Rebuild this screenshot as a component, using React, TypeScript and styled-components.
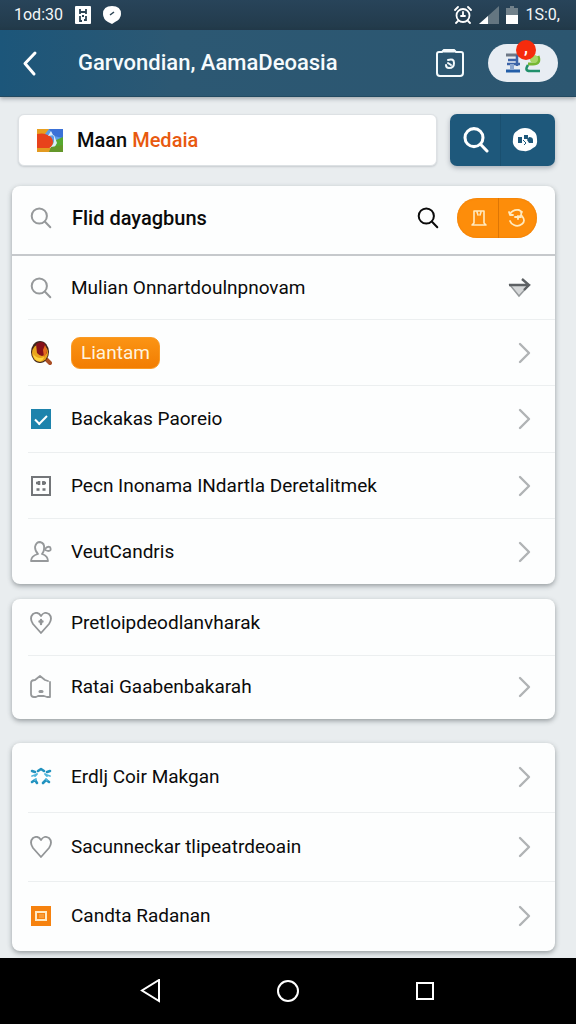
import React from 'react';
import styled, { createGlobalStyle } from 'styled-components';

const GlobalStyle = createGlobalStyle`
  * { box-sizing: border-box; }
  body {
    margin: 0;
    background: #e9edef;
    font-family: Roboto, 'Liberation Sans', sans-serif;
    color: #0b0b0b;
  }
  button, input { font: inherit; color: inherit; }
  button { border: 0; padding: 0; background: none; cursor: pointer; }
  a { color: inherit; text-decoration: none; }
  svg { display: block; flex: none; }
`;

const Page = styled.div`
  display: flex;
  flex-direction: column;
  min-height: 100vh;
`;

const StatusBar = styled.div`
  display: flex;
  align-items: center;
  justify-content: space-between;
  height: 30px;
  padding: 0 16px 0 14px;
  background: linear-gradient(#28445a, #223a4a);
  color: #f3f7f9;
  font-size: 16px;
  line-height: 20px;
`;

const StatusGroup = styled.div<{ $gap: number }>`
  display: flex;
  align-items: center;
  gap: ${(p) => p.$gap}px;
`;

const AppBar = styled.header`
  display: flex;
  align-items: center;
  height: 67px;
  padding: 0 18px 0 16px;
  background: linear-gradient(90deg, #1c567a, #2c5873 30%, #2c5670);
  border-bottom: 1px solid #234a61;
  box-shadow: 0 2px 4px rgba(40, 50, 60, 0.35);
  color: #f6fbfd;
`;

const Title = styled.h1`
  flex: 1;
  margin: 0 0 0 34px;
  font-size: 22px;
  line-height: 32px;
  font-weight: 500;
  white-space: nowrap;
`;

const IconButton = styled.button`
  display: flex;
  align-items: center;
  justify-content: center;
`;

const AccountPill = styled.button`
  position: relative;
  display: flex;
  align-items: center;
  justify-content: center;
  width: 70px;
  height: 38px;
  margin-left: 24px;
  border-radius: 19px;
  background: #e8edf3;
`;

const Badge = styled.span`
  position: absolute;
  top: -4px;
  left: 28px;
  width: 20px;
  height: 20px;
  border-radius: 50%;
  background: #f62b0c;
  color: #fff;
  font-size: 16px;
  line-height: 16px;
  font-weight: 700;
`;

const Main = styled.main`
  flex: 1;
  display: flex;
  flex-direction: column;
  padding: 17px 21px 7px 12px;
`;

const TopRow = styled.div`
  display: flex;
  align-items: center;
  gap: 13px;
  padding-left: 6px;
  margin-bottom: 20px;
`;

const BrandField = styled.a`
  flex: 1;
  display: flex;
  align-items: center;
  gap: 14px;
  height: 52px;
  padding: 0 18px;
  border: 1px solid #dde1e4;
  border-radius: 6px;
  background: #fff;
  box-shadow: 0 1px 2px rgba(60, 70, 80, 0.2);
  font-size: 20px;
  line-height: 28px;
  font-weight: 500;
  white-space: nowrap;
`;

const Accent = styled.span`
  color: #e8590f;
`;

const ActionGroup = styled.div`
  display: flex;
  width: 105px;
  height: 52px;
  padding: 0 6px 0 2px;
  border-radius: 7px;
  background: #1e587b;
  box-shadow: 0 2px 5px rgba(50, 60, 80, 0.35);
`;

const ActionButton = styled(IconButton)`
  flex: 1;
  & + & { border-left: 1px solid #1a5070; }
`;

const Card = styled.section<{ $gap?: number }>`
  margin-bottom: ${(p) => p.$gap ?? 0}px;
  border-radius: 8px;
  background: #fdfefe;
  box-shadow: 0 2px 5px rgba(50, 60, 65, 0.45);
`;

const SearchRow = styled.form`
  display: flex;
  align-items: center;
  height: 70px;
  padding: 0 18px 4px;
  border-bottom: 2px solid #c6c9cc;
`;

const SearchInput = styled.input`
  flex: 1;
  min-width: 0;
  margin-left: 20px;
  padding: 0;
  border: 0;
  outline: 0;
  background: none;
  font-size: 20px;
  line-height: 28px;
  font-weight: 500;
`;

const OrangeGroup = styled.div`
  display: flex;
  width: 80px;
  height: 40px;
  margin-left: 18px;
  padding: 0 2px 0 4px;
  border-radius: 20px;
  background: #fd8d0a;
  box-shadow: inset 0 0 2px #e87800;
`;

const OrangeButton = styled(IconButton)`
  flex: 1;
  & + & { border-left: 1px solid #dd7605; }
`;

const List = styled.ul`
  margin: 0;
  padding: 0 0 0 16px;
  list-style: none;
`;

const Item = styled.li<{ $height: number }>`
  display: flex;
  height: ${(p) => p.$height}px;
  & + & { border-top: 1px solid #eceff0; }
`;

const RowLink = styled.a<{ $lift?: number }>`
  flex: 1;
  display: flex;
  align-items: center;
  gap: 19px;
  padding: 0 24px ${(p) => p.$lift ?? 0}px 2px;
  font-size: 19px;
  line-height: 28px;
  white-space: nowrap;
`;

const RowLabel = styled.span`
  flex: 1;
`;

const RowCheckLabel = styled(RowLink).attrs({ as: 'label' })``;

const Tag = styled.span`
  padding: 1px 9px;
  border-radius: 9px;
  background: linear-gradient(#fb9414, #f27d02);
  border: 1px solid #fa9a24;
  color: #fff3dc;
`;

const Spacer = styled.span`
  flex: 1;
`;

const CheckBox = styled.input`
  appearance: none;
  display: flex;
  align-items: center;
  justify-content: center;
  flex: none;
  width: 20px;
  height: 20px;
  margin: 0 1px;
  background: #1d83ac;
  &:checked::after {
    content: '';
    width: 10px;
    height: 5px;
    border: solid #fff;
    border-width: 0 0 2px 2px;
    transform: translateY(-1px) rotate(-45deg);
  }
`;

const NavBar = styled.nav`
  display: flex;
  align-items: center;
  justify-content: space-between;
  height: 66px;
  padding: 0 24%;
  background: #000;
`;

const svgBase = { fill: 'none', strokeLinecap: 'round', strokeLinejoin: 'round' } as const;

const SearchIcon = ({ size = 22, color = '#96999b', width = 2 }) => (
  <svg {...svgBase} width={size} height={size} viewBox="0 0 22 22" stroke={color} strokeWidth={width}>
    <circle cx="9.3" cy="9" r="7.6" />
    <path d="M15 14.8 20.3 20.3" />
  </svg>
);

const Chevron = () => (
  <svg {...svgBase} width="14" height="22" viewBox="0 0 14 22" stroke="#b0b3b5" strokeWidth="2.4">
    <path d="M3 2 12 11 3 20" />
  </svg>
);

const ArrowMark = () => (
  <svg width="24" height="22" viewBox="0 0 24 22" fill="none">
    <path d="M3 8H22L12 19Z" fill="#d6d8d9" stroke="#969a9c" strokeWidth="1.5" />
    <path d="M2 8H22M15 2 22 8 17 13" stroke="#5d6164" strokeWidth="2.4" />
  </svg>
);

const BackIcon = () => (
  <svg {...svgBase} width="28" height="28" viewBox="0 0 28 28" stroke="#fff" strokeWidth="3">
    <path d="M19 4 9 14.500 18 25" />
  </svg>
);

const ClipIcon = () => (
  <svg {...svgBase} width="28" height="30" viewBox="0 0 28 30" stroke="#f4fafc" strokeWidth="2">
    <path d="M3 4H6L8 2H18L20 4H25Q27 4 27 6V25Q27 28 24 28H4Q1 28 1 25V6Q1 4 3 4Z" />
    <path d="M8 3H18" strokeWidth="3" />
    <path d="M12 12Q18 10 18 15Q18 20 13 20Q10 20 10 17M12 15 15 17" />
  </svg>
);

const AccountArt = () => (
  <svg width="38" height="24" viewBox="0 0 38 24" fill="none">
    <path d="M2 4H16" stroke="#6e7887" strokeWidth="3" />
    <path d="M4 9H14M13 4V15M3 13H16" stroke="#3d64a8" strokeWidth="2.500" />
    <path d="M2 20H16" stroke="#235ea8" strokeWidth="3" />
    <path d="M8 13V19" stroke="#8ba6cf" strokeWidth="4" />
    <path d="M34 5Q37 13 29 13H24" stroke="#76b832" strokeWidth="3" />
    <circle cx="30" cy="8" r="4" fill="#a7d665" />
    <path d="M24 14Q20 20 26 20H36" stroke="#21906b" strokeWidth="2.500" />
  </svg>
);

const BrandArt = () => (
  <svg width="26" height="23" viewBox="0 0 26 23">
    <rect width="26" height="23" fill="#5c9ee8" />
    <path d="M0 0H12L8 5H0Z" fill="#e89f20" />
    <path d="M12 0H26V9L17 7Z" fill="#3b71d7" />
    <path d="M17 12 26 8V23H12Z" fill="#56a82f" />
    <path d="M0 5Q8 3 14 8Q18 13 14 19L8 22H0Z" fill="#e8421b" />
    <path d="M11 7 14 2 17 8Q18 16 11 20L16 21 20 14 17 6" fill="#dcecf8" />
    <path d="M0 19H26V23H0Z" fill="#e39a20" />
    <path d="M14 18 26 16V23H12Z" fill="#64972a" />
  </svg>
);

const RobotIcon = () => (
  <svg width="26" height="24" viewBox="0 0 26 24">
    <path d="M5 3Q8 0 13 0Q18 0 21 3Q25 5 25 11Q26 18 21 20Q17 24 12 23Q6 23 4 20Q0 17 1 11Q1 5 5 3Z" fill="#fff" />
    <path d="M6 9H10V15H6ZM12 7H16V11H12ZM17 9Q21 9 21 12V15H17L15 12Z" fill="#1e587b" />
    <path d="M11 12 14 15 12 17" stroke="#1e587b" fill="none" />
  </svg>
);

const StandIcon = () => (
  <svg {...svgBase} width="18" height="18" viewBox="0 0 18 18" stroke="#ffeabf" strokeWidth="1.6">
    <path d="M4 2H14V14L16 16H2L4 14ZM7 3 8 6M11 3 10 6" />
  </svg>
);

const HistoryIcon = () => (
  <svg {...svgBase} width="20" height="20" viewBox="0 0 20 20" stroke="#ffeabf" strokeWidth="1.8">
    <path d="M3 6Q6 1 12 2L15 4M2 4 3 7 6 7M14 4Q15 7 13 8M15 8Q19 13 15 16Q11 19 7 17Q4 16 3 13" />
    <path d="M8 9H14M11 8V11" />
  </svg>
);

const GemIcon = () => (
  <svg width="22" height="26" viewBox="0 0 22 26">
    <path d="M15 18 20 23" stroke="#a94e25" strokeWidth="4" strokeLinecap="round" />
    <ellipse cx="10" cy="12" rx="9" ry="11" fill="#3e261c" />
    <ellipse cx="10" cy="13" rx="8" ry="9" fill="#e9a51d" />
    <path d="M6 4Q12 0 15 4L17 13Q12 19 7 13Z" fill="#861019" />
    <path d="M15 5Q19 12 14 17L13 10Z" fill="#e56a1c" />
    <path d="M3 14Q8 20 14 17Q13 22 8 21Q4 20 3 14" fill="#ffd43c" />
  </svg>
);

const GridIcon = () => (
  <svg width="22" height="22" viewBox="0 0 22 22" fill="none" stroke="#737679">
    <rect x="2" y="2" width="18" height="18" strokeWidth="2" />
    <path d="M6 8H10M9 6V10M12 8H16M13.500 6V10M6.500 14.500H9.500M12.500 14.500H15.500" strokeWidth="2.600" />
  </svg>
);

const PersonIcon = () => (
  <svg {...svgBase} width="22" height="22" viewBox="0 0 22 22" stroke="#96999b" strokeWidth="1.8">
    <path d="M8 13Q5 10 5 6Q6 1 10 1Q15 2 14 8Q14 11 12 13Q18 15 18 20H1Q1 15 8 13Z" />
    <path d="M15 8Q17 5 20 6Q22 10 18 10L15 9" />
  </svg>
);

const HeartIcon = ({ pin = false }) => (
  <svg {...svgBase} width="22" height="22" viewBox="0 0 22 22" stroke="#929597" strokeWidth="1.8">
    <path d="M11 21 3 12Q-1 6 3 2Q8-1 11 4Q14-1 19 2Q23 6 19 12Z" />
    {pin && <path d="M11 8V12M9.500 9.500H12.500" strokeWidth="2.400" />}
  </svg>
);

const HomeBagIcon = () => (
  <svg {...svgBase} width="22" height="24" viewBox="0 0 22 24" stroke="#96999b" strokeWidth="1.8">
    <path d="M4 22Q1 22 1 19V8Q1 5 5 5L10 1 15 5 18 6M20 7V22L17 22L14 21H8L6 22H4" />
    <path d="M10 16.500H12" strokeWidth="3" />
  </svg>
);

const PuzzleIcon = () => (
  <svg {...svgBase} width="22" height="20" viewBox="0 0 22 20" stroke="#2192bf" strokeWidth="2.600">
    <path d="M2 4 5 5M8 4 11 2 14 4M17 5 20 4M2 15 5 13 7 16M13 16 16 13 19 15" />
    <path d="M5 8 2 9M17 8 20 9M7 7 5 9M15 7 17 9M6 12 5 13M16 12 17 13" stroke="#50b6dc" strokeWidth="1.800" />
  </svg>
);

const FrameIcon = () => (
  <svg width="22" height="22" viewBox="0 0 22 22">
    <rect x="1" y="1" width="20" height="20" fill="#f6820f" />
    <rect x="6" y="7" width="10" height="8" fill="#f6820f" stroke="#ffe9c3" strokeWidth="2" />
    <rect x="9" y="9" width="5" height="4" fill="#f99a35" />
  </svg>
);

const SimIcon = () => (
  <svg width="16" height="18" viewBox="0 0 16 18">
    <rect width="16" height="18" rx="1" fill="#fff" />
    <path d="M5 3V8M11 3V8M5 6H11M5 10V15H7M11 10V14H9M7 10H9" stroke="#2b4353" strokeWidth="1.800" fill="none" />
  </svg>
);

const BubbleIcon = () => (
  <svg width="18" height="18" viewBox="0 0 18 18">
    <path d="M9 0Q18 0 18 8Q18 13 12 16L9 18 5 16Q0 13 0 8Q0 0 9 0Z" fill="#fff" />
    <path d="M7 9 11 6" stroke="#2b4353" strokeWidth="1.500" />
  </svg>
);

const AlarmIcon = () => (
  <svg {...svgBase} width="18" height="18" viewBox="0 0 18 18" stroke="#fff" strokeWidth="1.800">
    <circle cx="9" cy="9.500" r="6.500" />
    <path d="M1 4 4 1M14 1 17 4M4 15 2 17M14 15 16 17M9 6V10H11M7 10H9" />
  </svg>
);

const SignalIcon = () => (
  <svg width="20" height="18" viewBox="0 0 20 18">
    <path d="M0 18 20 0V18Z" fill="#647681" />
    <path d="M0 18 9 10V18Z" fill="#fff" />
  </svg>
);

const BatteryIcon = () => (
  <svg width="12" height="18" viewBox="0 0 12 18">
    <path d="M0 2H4V0H8V2H12V9H0Z" fill="#71818b" />
    <path d="M0 9H12V18H0Z" fill="#fff" />
  </svg>
);

interface Row {
  label: string;
  icon: React.ReactNode;
  height: number;
  end?: 'chevron' | 'arrow' | 'none';
  kind?: 'tag' | 'check';
  lift?: number;
}

const searchRows: Row[] = [
  { label: 'Mulian Onnartdoulnpnovam', icon: <SearchIcon />, height: 63, end: 'arrow' },
  { label: 'Liantam', icon: <GemIcon />, height: 66, kind: 'tag' },
  { label: 'Backakas Paoreio', icon: null, height: 67, kind: 'check' },
  { label: 'Pecn Inonama INdartla Deretalitmek', icon: <GridIcon />, height: 66 },
  { label: 'VeutCandris', icon: <PersonIcon />, height: 66 },
];

const savedRows: Row[] = [
  { label: 'Pretloipdeodlanvharak', icon: <HeartIcon pin />, height: 56, end: 'none', lift: 8 },
  { label: 'Ratai Gaabenbakarah', icon: <HomeBagIcon />, height: 64, lift: 2 },
];

const moreRows: Row[] = [
  { label: 'Erdlj Coir Makgan', icon: <PuzzleIcon />, height: 69, lift: 2 },
  { label: 'Sacunneckar tlipeatrdeoain', icon: <HeartIcon />, height: 69 },
  { label: 'Candta Radanan', icon: <FrameIcon />, height: 70, lift: 2 },
];

const RowList = ({ rows }: { rows: Row[] }) => (
  <List>
    {rows.map(({ label, icon, height, end = 'chevron', kind, lift }) => (
      <Item key={label} $height={height}>
        {kind === 'check' ? (
          <RowCheckLabel>
            <CheckBox type="checkbox" defaultChecked />
            <RowLabel>{label}</RowLabel>
            <Chevron />
          </RowCheckLabel>
        ) : (
          <RowLink href="#" $lift={lift}>
            {icon}
            {kind === 'tag' ? (
              <>
                <Tag>{label}</Tag>
                <Spacer />
              </>
            ) : (
              <RowLabel>{label}</RowLabel>
            )}
            {end === 'chevron' && <Chevron />}
            {end === 'arrow' && <ArrowMark />}
          </RowLink>
        )}
      </Item>
    ))}
  </List>
);

export default function App() {
  return (
    <Page>
      <GlobalStyle />
      <StatusBar>
        <StatusGroup $gap={12}>
          <span>1od:30</span>
          <SimIcon />
          <BubbleIcon />
        </StatusGroup>
        <StatusGroup $gap={7}>
          <AlarmIcon />
          <SignalIcon />
          <BatteryIcon />
          <span>1S:0,</span>
        </StatusGroup>
      </StatusBar>
      <AppBar>
        <IconButton type="button" aria-label="Back">
          <BackIcon />
        </IconButton>
        <Title>Garvondian, AamaDeoasia</Title>
        <IconButton type="button" aria-label="Clipboard">
          <ClipIcon />
        </IconButton>
        <AccountPill type="button" aria-label="Account">
          <AccountArt />
          <Badge>,</Badge>
        </AccountPill>
      </AppBar>
      <Main>
        <TopRow>
          <BrandField href="#">
            <BrandArt />
            <span>
              Maan <Accent>Medaia</Accent>
            </span>
          </BrandField>
          <ActionGroup>
            <ActionButton type="button" aria-label="Search">
              <SearchIcon size={26} color="#fff" width={2.6} />
            </ActionButton>
            <ActionButton type="button" aria-label="Assistant">
              <RobotIcon />
            </ActionButton>
          </ActionGroup>
        </TopRow>
        <Card $gap={15}>
          <SearchRow onSubmit={(e) => e.preventDefault()}>
            <SearchIcon />
            <SearchInput aria-label="Find" defaultValue="Flid dayagbuns" />
            <IconButton type="submit" aria-label="Submit search">
              <SearchIcon color="#0b0b0b" />
            </IconButton>
            <OrangeGroup>
              <OrangeButton type="button" aria-label="Board">
                <StandIcon />
              </OrangeButton>
              <OrangeButton type="button" aria-label="History">
                <HistoryIcon />
              </OrangeButton>
            </OrangeGroup>
          </SearchRow>
          <RowList rows={searchRows} />
        </Card>
        <Card $gap={24}>
          <RowList rows={savedRows} />
        </Card>
        <Card>
          <RowList rows={moreRows} />
        </Card>
      </Main>
      <NavBar>
        <IconButton type="button" aria-label="Back">
          <svg width="24" height="24" viewBox="0 0 24 24" fill="none" stroke="#fff" strokeWidth="2">
            <path d="M21 1V22L4 11.500Z" />
          </svg>
        </IconButton>
        <IconButton type="button" aria-label="Home">
          <svg width="24" height="24" viewBox="0 0 24 24" fill="none" stroke="#fff" strokeWidth="2">
            <circle cx="12" cy="12" r="10" />
          </svg>
        </IconButton>
        <IconButton type="button" aria-label="Recent apps">
          <svg width="24" height="24" viewBox="0 0 24 24" fill="none" stroke="#fff" strokeWidth="2">
            <rect x="3" y="4" width="16" height="16" />
          </svg>
        </IconButton>
      </NavBar>
    </Page>
  );
}
